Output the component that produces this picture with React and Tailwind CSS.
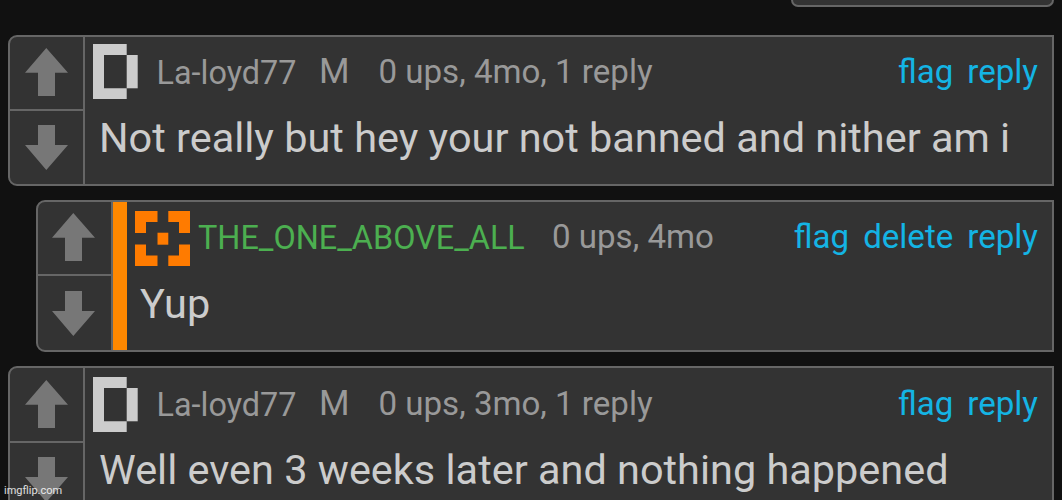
import React from "react";

const comments = [
    {
        id: 1,
        user: "La-loyd77",
        badge: "M",
        stats: "0 ups, 4mo, 1 reply",
        text: "Not really but hey your not banned and nither am i",
        actions: ["flag", "reply"],
    },
    {
        id: 2,
        user: "THE_ONE_ABOVE_ALL",
        own: true,
        stats: "0 ups, 4mo",
        text: "Yup",
        actions: ["flag", "delete", "reply"],
    },
    {
        id: 3,
        user: "La-loyd77",
        badge: "M",
        stats: "0 ups, 3mo, 1 reply",
        text: "Well even 3 weeks later and nothing happened",
        actions: ["flag", "reply"],
    },
];

function VoteButtons({ own }) {
    return (
        <div className="flex flex-col w-[75px] shrink-0 border-r-2 border-[#666]">
            <button className={`flex items-start shrink-0 border-b-2 border-[#666] h-[74px] pt-[11px] group-last:h-[75px] group-last:pt-[12px] ${own ? "pl-[14px]" : "pl-[15px]"}`}>
                <svg width="43" height="48" viewBox="0 0 43 48" fill="#777">
                    <path d="M21.3 0 43 24.7H30V48H13V24.7H0z" />
                </svg>
            </button>
            <button className={`flex items-start h-[73px] shrink-0 ${own ? "pl-[14px] pt-[15px]" : "pl-[15px] pt-[14px]"}`}>
                <svg width="43" height="45" viewBox="0 0 43 45" fill="#777">
                    <path d="M13 0h17v20h13L21.3 45 0 20h13z" />
                </svg>
            </button>
        </div>
    );
}

function LetterIcon() {
    return (
        <svg width="45" height="55" viewBox="0 0 45 55" fill="#ccc" className="shrink-0 group-last:mt-px">
            <path d="M0 0h33.7v11H11v33.3h22.7V55H0z" />
            <path d="M33.7 11h11v33.3h-11z" />
        </svg>
    );
}

function TargetIcon() {
    return (
        <svg width="55" height="55" viewBox="0 0 55 55" fill="#ff7b00" className="shrink-0">
            <path d="M0 0h22.5v11H11v11H0zM33.3 0H55v22H44V11H33.3zM0 33.5h11v11h11.5V55H0zM44 33.5h11V55H33.3V44.5H44z" />
            <path d="M22.5 21.7h10.8v12H22.5z" />
        </svg>
    );
}

function Comment({ comment }) {
    const { user, badge, own, stats, text, actions } = comment;
    return (
        <div className={`group flex bg-[#333] border-2 border-[#666] rounded-l-[9px] ${own ? "ml-7 h-[152px]" : "h-[151px]"}`}>
            <VoteButtons own={own} />
            {own && <div className="w-[14px] shrink-0 bg-[#ff8800]" />}
            <div className="flex-1 min-w-0 group-last:pt-px">
                <div className={`flex items-start h-[62px] pr-[14px] pl-[8px] text-[33.1px] leading-[40px] text-[#999] whitespace-nowrap ${own ? "pt-[9px]" : "pt-[7px]"}`}>
                    {own ? <TargetIcon /> : <LetterIcon />}
                    <span className={`text-[32.4px] ${own ? "ml-[8px] mt-[7px] w-[354px] text-[#4caf50]" : "ml-[18.5px] mt-[9px] w-[162.5px]"}`}>{user}</span>
                    {badge && <span className="mt-[8px] w-[59.5px] text-[35px]">{badge}</span>}
                    <span className={own ? "mt-[6px]" : "mt-[8px]"}>{stats}</span>
                    <div className={`ml-auto flex gap-[14px] text-[#14b4e4] ${own ? "mt-[6px]" : "mt-[8px]"}`}>
                        {actions.map((a) => <a key={a}>{a}</a>)}
                    </div>
                </div>
                <p className={`text-[41.45px] leading-[48px] text-[#ccc] whitespace-nowrap ${own ? "pl-[13px] mt-[16px]" : "pl-[14px] mt-[15px]"}`}>{text}</p>
            </div>
        </div>
    );
}

export default function App() {
    return (
        <div className="relative w-[1062px] h-[500px] overflow-hidden bg-[#111] font-[Roboto,sans-serif] pl-2 pr-2">
            <div className="ml-auto w-[263px] h-[7px] bg-[#333] border-2 border-t-0 border-[#666] rounded-b-[8px]" />
            <div className="flex flex-col gap-[14px] mt-7">
                {comments.map((c) => <Comment key={c.id} comment={c} />)}
            </div>
            <span className="absolute left-1 bottom-[2px] text-[11px] leading-[14px] text-white/85">imgflip.com</span>
        </div>
    );
}
